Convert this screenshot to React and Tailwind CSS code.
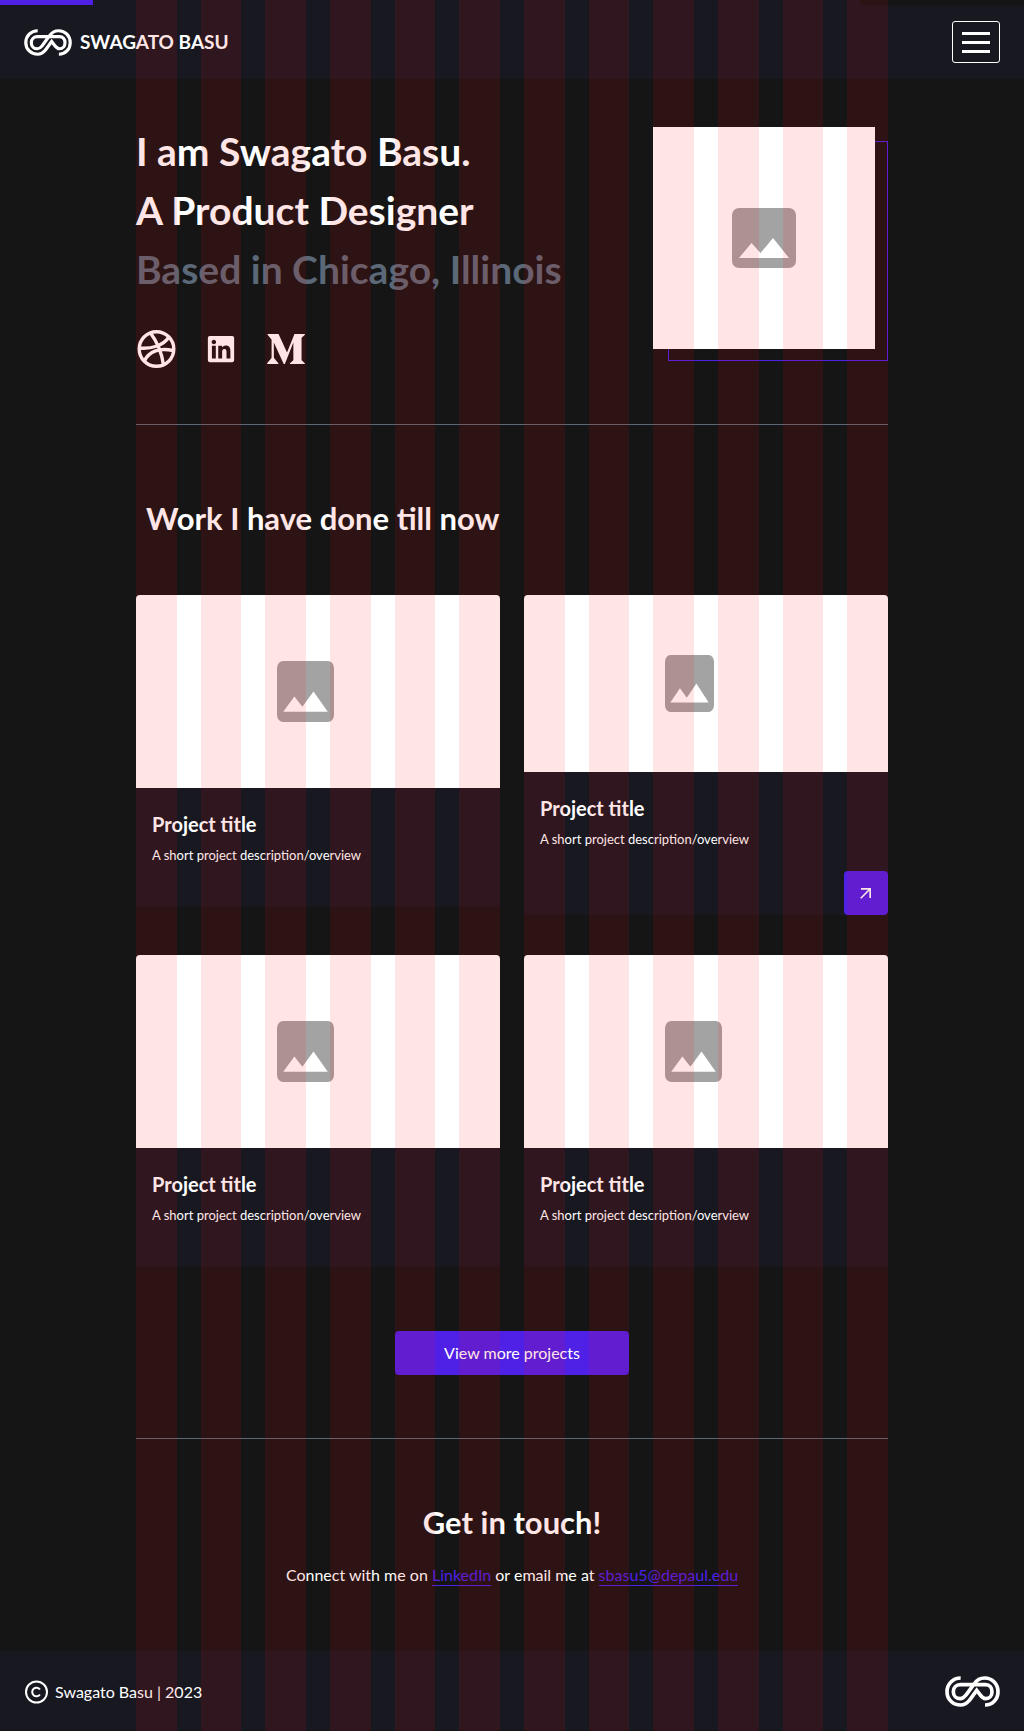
import { FaLinkedin, FaMediumM } from "react-icons/fa";
import { MdArrowOutward } from "react-icons/md";

function Logo({ className }) {
  return (
    <svg viewBox="0 0 165 93" className={className} fill="none" stroke="#fff" strokeWidth="11" aria-hidden="true">
      <path d="M47 6C24 6 6 24 6 47C6 70 24 87 47 87C62 87 68 79 74 72L95 43L105 56C110 63 114 68 122 68C134 68 141 59 141 47C141 35 134 26 122 26H46C34 26 25 35 25 47C25 59 34 68 46 68C54 68 58 63 63 57L88 23C96 11 104 6 119 6C142 6 159 24 159 47C159 70 142 87 120 87" />
    </svg>
  );
}

function DribbbleIcon() {
  return (
    <svg viewBox="0 0 40 40" className="size-10" fill="none" stroke="#fff" strokeWidth="3.400" aria-hidden="true">
      <circle cx="20.500" cy="20" r="17.300" />
      <path d="M14.500 4C20.500 12 25.500 22 27.500 36M3.500 19C15 20 27 17 33 8M8.500 32C13 22 24 18.500 37 21.500" />
    </svg>
  );
}

function PictureIcon({ className }) {
  return (
    <svg viewBox="0 0 64 60" preserveAspectRatio="none" className={className} fill="#000" fillOpacity="0.36" role="img" aria-label="Image placeholder">
      <path
        fillRule="evenodd"
        d="M7 0H57A7 7 0 0 1 64 7V53A7 7 0 0 1 57 60H7A7 7 0 0 1 0 53V7A7 7 0 0 1 7 0ZM7 50H57L41 30L28.500 45L19.500 35Z"
      />
    </svg>
  );
}

function Copyright() {
  return (
    <svg viewBox="0 0 24 24" className="size-6" fill="none" stroke="#fff" strokeWidth="2" aria-hidden="true">
      <circle cx="12.500" cy="12" r="10.500" />
      <path d="M16 9.500A4.300 4.300 0 1 0 16 14.500" />
    </svg>
  );
}

function ProjectCard({ active }) {
  return (
    <article className="relative self-start overflow-hidden rounded-sm bg-[#181821]">
      <div className={active ? "flex h-[177px] items-center bg-white pl-[38.700%]" : "flex h-[193px] items-center bg-white pl-[38.700%]"}>
        <PictureIcon className={active ? "h-[57px] w-[49px]" : "h-[61px] w-[57px]"} />
      </div>
      <div className={active ? "px-4 pt-6 pb-16" : "px-4 pt-6 pb-10"}>
        <h3 className="text-[20px] leading-6 font-bold">Project title</h3>
        <p className="mt-2 text-[13px] leading-[23px]">A short project description/overview</p>
      </div>
      {active && (
        <button type="button" aria-label="Open project" className="absolute right-0 bottom-0 flex size-11 items-center justify-center rounded-sm bg-[#4f20e6]">
          <MdArrowOutward size={20} />
        </button>
      )}
    </article>
  );
}

function ColumnGuides() {
  return (
    <div aria-hidden="true" className="pointer-events-none absolute inset-0 mx-auto grid max-w-[752px] grid-cols-12 gap-6">
      {Array.from({ length: 12 }, (_, i) => (
        <div key={i} className="bg-[#ff0000]/10" />
      ))}
    </div>
  );
}

export default function App() {
  return (
    <div className="relative min-h-screen bg-[#151515] font-['Lato',sans-serif] text-white">
      <header className="relative flex h-[79px] items-center justify-between bg-[#181821] px-6 pt-[5px]">
        <div className="absolute inset-x-0 top-0 flex h-[5px] justify-between">
          <div className="w-[9.100%] bg-[#4f20e6]" />
          <div className="w-[16%] bg-[#151515]" />
        </div>
        <a href="#home" className="flex items-center gap-2">
          <Logo className="h-[27px] w-12" />
          <span className="text-[19px] leading-6 font-bold">SWAGATO BASU</span>
        </a>
        <button type="button" aria-label="Open menu" className="flex h-[42px] w-12 flex-col items-center justify-center gap-[6px] rounded-[3px] border border-white">
          <span className="h-[3px] w-7 bg-white" />
          <span className="h-[3px] w-7 bg-white" />
          <span className="h-[3px] w-7 bg-white" />
        </button>
      </header>

      <main className="mx-auto max-w-[752px]">
        <section id="home" className="flex items-start justify-between border-b border-[#5b6877] pt-12 pb-[55px]">
          <div>
            <h1 className="-mt-[5px] text-[39px] leading-[59px] font-bold">
              I am Swagato Basu.
              <br />
              A Product Designer
              <br />
              <span className="text-[#5b6877]">Based in Chicago, Illinois</span>
            </h1>
            <div className="mt-[30px] flex items-center gap-[30px]">
              <a href="#dribbble" aria-label="Dribbble"><DribbbleIcon /></a>
              <a href="#linkedin" aria-label="LinkedIn"><FaLinkedin size={30} /></a>
              <a href="#medium" aria-label="Medium"><FaMediumM size={40} /></a>
            </div>
          </div>
          <div className="relative pr-[13px] pb-3">
            <div className="absolute top-[14px] right-0 bottom-0 left-[15px] border border-[#4f20e6]" />
            <div className="relative flex size-[222px] items-center justify-center bg-white">
              <PictureIcon className="h-[60px] w-16" />
            </div>
          </div>
        </section>

        <section className="border-b border-[#5b6877] pt-[69px] pb-[63px]">
          <h2 className="ml-[10px] text-[31px] leading-[48px] font-bold">Work I have done till now</h2>
          <div className="mt-[53px] grid grid-cols-2 gap-x-6 gap-y-10">
            <ProjectCard />
            <ProjectCard active />
            <ProjectCard />
            <ProjectCard />
          </div>
          <button type="button" className="mx-auto mt-16 block h-11 w-[234px] rounded-sm bg-[#4f20e6] text-[16px]">
            View more projects
          </button>
        </section>

        <section className="pt-[59px] pb-16 text-center">
          <h2 className="text-[31px] leading-[48px] font-bold">Get in touch!</h2>
          <p className="mt-[17px] text-[16px] leading-6">
            Connect with me on{" "}
            <a href="#linkedin" className="border-b border-[#4f20e6] pb-px text-[#4f20e6]">LinkedIn</a>{" "}
            or email me at{" "}
            <a href="mailto:sbasu5@depaul.edu" className="border-b border-[#4f20e6] pb-px text-[#4f20e6]">sbasu5@depaul.edu</a>
          </p>
        </section>
      </main>

      <footer className="flex h-[79px] items-center justify-between bg-[#181821] px-6 pt-0.5">
        <p className="flex items-center gap-[7px] text-[16px] leading-6">
          <Copyright />
          Swagato Basu | 2023
        </p>
        <Logo className="h-[31px] w-[55px]" />
      </footer>

      <ColumnGuides />
    </div>
  );
}
